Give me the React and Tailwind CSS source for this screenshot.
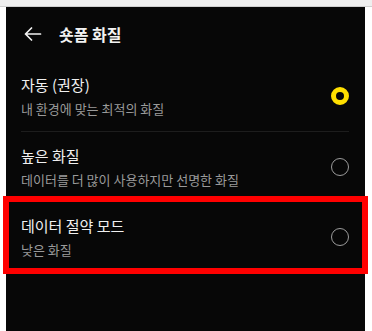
import React from 'react';

const options = [
    { id: 'auto', title: '자동 (권장)', desc: '내 환경에 맞는 최적의 화질', selected: true },
    { id: 'high', title: '높은 화질', desc: '데이터를 더 많이 사용하지만 선명한 화질', selected: false },
    { id: 'saver', title: '데이터 절약 모드', desc: '낮은 화질', selected: false },
];

const Radio = ({ checked }) =>
    checked ? (
        <div className="w-[18px] h-[18px] rounded-full border-[5.5px] border-[#ffdf00] shrink-0" />
    ) : (
        <div className="w-[18px] h-[18px] rounded-full border-[1.5px] border-[#9c9c9c] shrink-0" />
    );

const App = () => {
    return (
        <div className="relative min-h-[331px] bg-white font-['Noto_Sans_CJK_KR','Noto_Sans',sans-serif]">
            <div className="h-[7px] bg-[#efefef] border-b border-[#cfcfcf]" />

            <div className="ml-[6px] w-[359px] h-[324px] bg-[#070707]">
                <div className="h-[54px] flex items-center pl-[18px]">
                    <svg width="18" height="14" viewBox="0 0 18 14" fill="none" stroke="#f2f2f2" strokeWidth="1.7" strokeLinecap="round" strokeLinejoin="round">
                        <path d="M1.5 7H16.5M7.5 1L1.5 7L7.5 13" />
                    </svg>
                    <span className="ml-[17px] text-[16px] leading-[20px] font-bold text-[#f2f2f2]">숏폼 화질</span>
                </div>

                {options.map((opt, i) => (
                    <div key={opt.id}>
                        <div className="h-[70px] flex items-center justify-between pl-[15px] pr-[16px]">
                            <div className="flex flex-col">
                                <span className="text-[15px] leading-[20px] text-[#f0f0f0]">{opt.title}</span>
                                <span className="mt-[5px] text-[13px] leading-[17px] text-[#9a9a9a]">{opt.desc}</span>
                            </div>
                            <Radio checked={opt.selected} />
                        </div>
                        {i === 0 && <div className="ml-[15px] mr-[16px] h-px bg-[#1d1d1d]" />}
                    </div>
                ))}
            </div>

            {/* highlight annotation */}
            <div className="absolute left-[3px] top-[196px] w-[365px] h-[78px] border-[6px] border-[#ff0000] pointer-events-none" />
        </div>
    );
};

export default App;
